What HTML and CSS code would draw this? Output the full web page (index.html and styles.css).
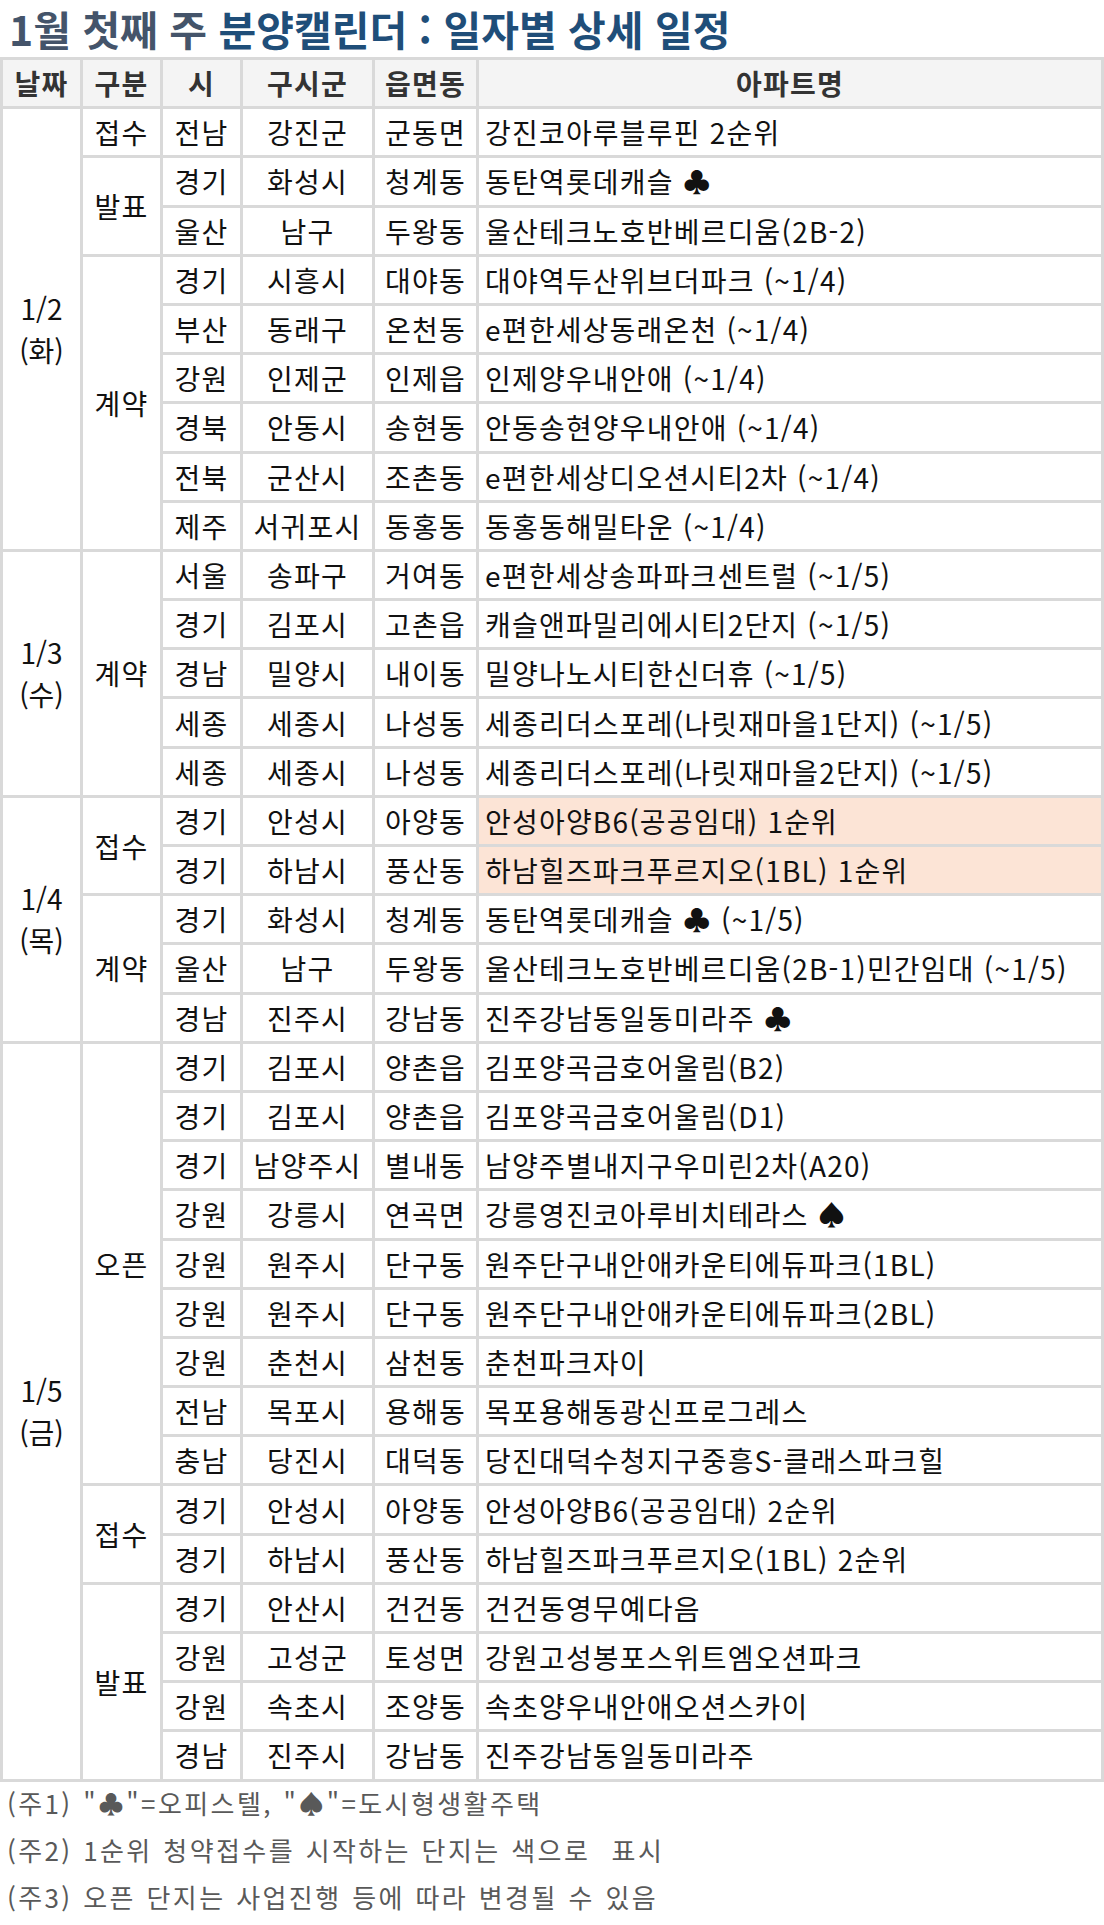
FILE: index.html
```html
<!DOCTYPE html>
<html lang="ko">
<head>
<meta charset="utf-8">
<title>1월 첫째 주 분양캘린더</title>
<link rel="stylesheet" href="styles.css">
</head>
<body>
<h1 class="title"><span class="t-week">1월 첫째 주</span> <span class="t-main">분양캘린더 : 일자별 상세 일정</span></h1>
<table class="cal">
<colgroup>
<col class="c-date"><col class="c-type"><col class="c-si"><col class="c-gu"><col class="c-dong"><col class="c-name">
</colgroup>
<thead>
<tr><th>날짜</th><th>구분</th><th>시</th><th>구시군</th><th>읍면동</th><th>아파트명</th></tr>
</thead>
<tbody>
<tr><td class="date" rowspan="9">1/2<br>(화)</td><td rowspan="1">접수</td><td>전남</td><td>강진군</td><td>군동면</td><td class="name">강진코아루블루핀 2순위</td></tr>
<tr><td rowspan="2">발표</td><td>경기</td><td>화성시</td><td>청계동</td><td class="name">동탄역롯데캐슬 ♣</td></tr>
<tr><td>울산</td><td>남구</td><td>두왕동</td><td class="name">울산테크노호반베르디움(2B-2)</td></tr>
<tr><td rowspan="6">계약</td><td>경기</td><td>시흥시</td><td>대야동</td><td class="name">대야역두산위브더파크 (~1/4)</td></tr>
<tr><td>부산</td><td>동래구</td><td>온천동</td><td class="name">e편한세상동래온천 (~1/4)</td></tr>
<tr><td>강원</td><td>인제군</td><td>인제읍</td><td class="name">인제양우내안애 (~1/4)</td></tr>
<tr><td>경북</td><td>안동시</td><td>송현동</td><td class="name">안동송현양우내안애 (~1/4)</td></tr>
<tr><td>전북</td><td>군산시</td><td>조촌동</td><td class="name">e편한세상디오션시티2차 (~1/4)</td></tr>
<tr><td>제주</td><td>서귀포시</td><td>동홍동</td><td class="name">동홍동해밀타운 (~1/4)</td></tr>

<tr><td class="date" rowspan="5">1/3<br>(수)</td><td rowspan="5">계약</td><td>서울</td><td>송파구</td><td>거여동</td><td class="name">e편한세상송파파크센트럴 (~1/5)</td></tr>
<tr><td>경기</td><td>김포시</td><td>고촌읍</td><td class="name">캐슬앤파밀리에시티2단지 (~1/5)</td></tr>
<tr><td>경남</td><td>밀양시</td><td>내이동</td><td class="name">밀양나노시티한신더휴 (~1/5)</td></tr>
<tr><td>세종</td><td>세종시</td><td>나성동</td><td class="name">세종리더스포레(나릿재마을1단지) (~1/5)</td></tr>
<tr><td>세종</td><td>세종시</td><td>나성동</td><td class="name">세종리더스포레(나릿재마을2단지) (~1/5)</td></tr>

<tr><td class="date" rowspan="5">1/4<br>(목)</td><td rowspan="2">접수</td><td>경기</td><td>안성시</td><td>아양동</td><td class="name hl">안성아양B6(공공임대) 1순위</td></tr>
<tr><td>경기</td><td>하남시</td><td>풍산동</td><td class="name hl">하남힐즈파크푸르지오(1BL) 1순위</td></tr>
<tr><td rowspan="3">계약</td><td>경기</td><td>화성시</td><td>청계동</td><td class="name">동탄역롯데캐슬 ♣ (~1/5)</td></tr>
<tr><td>울산</td><td>남구</td><td>두왕동</td><td class="name">울산테크노호반베르디움(2B-1)민간임대 (~1/5)</td></tr>
<tr><td>경남</td><td>진주시</td><td>강남동</td><td class="name">진주강남동일동미라주 ♣</td></tr>

<tr><td class="date" rowspan="15">1/5<br>(금)</td><td rowspan="9">오픈</td><td>경기</td><td>김포시</td><td>양촌읍</td><td class="name">김포양곡금호어울림(B2)</td></tr>
<tr><td>경기</td><td>김포시</td><td>양촌읍</td><td class="name">김포양곡금호어울림(D1)</td></tr>
<tr><td>경기</td><td>남양주시</td><td>별내동</td><td class="name">남양주별내지구우미린2차(A20)</td></tr>
<tr><td>강원</td><td>강릉시</td><td>연곡면</td><td class="name">강릉영진코아루비치테라스 ♠</td></tr>
<tr><td>강원</td><td>원주시</td><td>단구동</td><td class="name">원주단구내안애카운티에듀파크(1BL)</td></tr>
<tr><td>강원</td><td>원주시</td><td>단구동</td><td class="name">원주단구내안애카운티에듀파크(2BL)</td></tr>
<tr><td>강원</td><td>춘천시</td><td>삼천동</td><td class="name">춘천파크자이</td></tr>
<tr><td>전남</td><td>목포시</td><td>용해동</td><td class="name">목포용해동광신프로그레스</td></tr>
<tr><td>충남</td><td>당진시</td><td>대덕동</td><td class="name">당진대덕수청지구중흥S-클래스파크힐</td></tr>
<tr><td rowspan="2">접수</td><td>경기</td><td>안성시</td><td>아양동</td><td class="name">안성아양B6(공공임대) 2순위</td></tr>
<tr><td>경기</td><td>하남시</td><td>풍산동</td><td class="name">하남힐즈파크푸르지오(1BL) 2순위</td></tr>
<tr><td rowspan="4">발표</td><td>경기</td><td>안산시</td><td>건건동</td><td class="name">건건동영무예다음</td></tr>
<tr><td>강원</td><td>고성군</td><td>토성면</td><td class="name">강원고성봉포스위트엠오션파크</td></tr>
<tr><td>강원</td><td>속초시</td><td>조양동</td><td class="name">속초양우내안애오션스카이</td></tr>
<tr><td>경남</td><td>진주시</td><td>강남동</td><td class="name">진주강남동일동미라주</td></tr>
</tbody>
</table>
<div class="notes">
<p class="note">(주1) "♣"=오피스텔, "♠"=도시형생활주택</p>
<p class="note">(주2) 1순위 청약접수를 시작하는 단지는 색으로&nbsp; 표시</p>
<p class="note">(주3) 오픈 단지는 사업진행 등에 따라 변경될 수 있음</p>
</div>
</body>
</html>
```

FILE: styles.css
```css
html, body {
  margin: 0;
  padding: 0;
  background: #ffffff;
}

body {
  width: 1104px;
  font-family: "Noto Sans CJK KR", "Noto Sans", sans-serif;
  color: #111111;
}

.title {
  margin: 0;
  height: 57px;
  padding-left: 9px;
  font-size: 41px;
  line-height: 57px;
  font-weight: 700;
  white-space: nowrap;
}

.t-week {
  color: #44546a;
}

.t-main {
  color: #1f4e79;
}

.cal {
  width: 1104px;
  border-collapse: collapse;
  table-layout: fixed;
  border: 3px solid #d9d9d9;
  font-size: 28px;
  letter-spacing: 1.2px;
}

.c-date { width: 80px; }
.c-type { width: 80px; }
.c-si { width: 80px; }
.c-gu { width: 132px; }
.c-dong { width: 104px; }

.cal th,
.cal td {
  border: 3px solid #d9d9d9;
  height: 46.2px;
  padding: 0 2px;
  line-height: 36px;
  text-align: center;
  white-space: nowrap;
  vertical-align: middle;
}

.cal th {
  background: #f4f4f4;
  color: #333333;
  font-weight: 700;
}

.cal td.name {
  text-align: left;
  padding-left: 6px;
}

.cal td.hl {
  background: #fce4d6;
}

.cal td.date {
  line-height: 42px;
  letter-spacing: 0;
}

.notes {
  padding-left: 7px;
}

.note {
  margin: 0 0 6px;
  font-size: 26px;
  line-height: 41px;
  color: #595959;
  letter-spacing: 2.4px;
  word-spacing: 1px;
  white-space: nowrap;
}
```
